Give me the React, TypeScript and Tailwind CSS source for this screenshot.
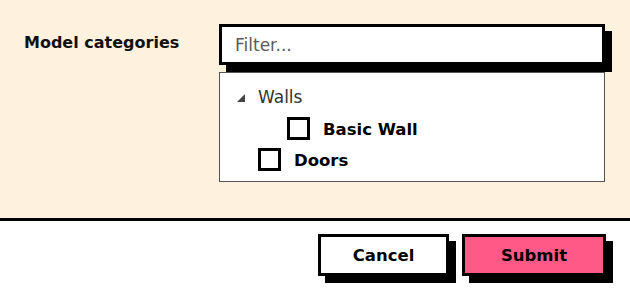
import { useState } from 'react';

type Category = {
  id: string;
  label: string;
  children?: Category[];
};

const categories: Category[] = [
  { id: 'walls', label: 'Walls', children: [{ id: 'basic-wall', label: 'Basic Wall' }] },
  { id: 'doors', label: 'Doors' },
];

function Checkbox({ checked, onChange }: { checked: boolean; onChange: () => void }) {
  return (
    <button
      type="button"
      onClick={onChange}
      className="w-[23px] h-[23px] shrink-0 border-[3px] border-black bg-white flex items-center justify-center"
    >
      {checked && <span className="w-[11px] h-[11px] bg-black" />}
    </button>
  );
}

export default function App() {
  const [filter, setFilter] = useState('');
  const [checked, setChecked] = useState<Record<string, boolean>>({});

  const toggle = (id: string) => setChecked((c) => ({ ...c, [id]: !c[id] }));

  return (
    <div className="w-[630px] h-[295px] flex flex-col font-['DejaVu_Sans',sans-serif] text-black overflow-hidden">
      {/* Form area */}
      <div className="h-[218px] bg-[#fef2df] flex pl-6 pt-6">
        <div className="w-[195px] pt-[9px] text-[16px] leading-[20px] font-bold text-[#111]">
          Model categories
        </div>

        <div className="w-[386px] flex flex-col">
          <input
            value={filter}
            onChange={(e) => setFilter(e.target.value)}
            placeholder="Filter..."
            className="h-[41px] w-full border-[3px] border-black bg-white px-[13px] text-[17px] text-[#333] placeholder:text-[#5a5a5a] outline-none shadow-[7px_7px_0_0_#000]"
          />

          {/* Category tree */}
          <div className="mt-[7px] border border-[#555] bg-white pt-[9px] pb-[6px]">
            {categories.map((cat) =>
              cat.children ? (
                <div key={cat.id}>
                  <div className="h-[31px] flex items-center pl-[17px]">
                    <svg width="8" height="8" viewBox="0 0 8 8" className="mr-[13px]">
                      <polygon points="8,0 8,8 0,8" fill="#444" />
                    </svg>
                    <span className="text-[17px] text-[#333]">{cat.label}</span>
                  </div>
                  {cat.children.map((child) => (
                    <div key={child.id} className="h-[31px] flex items-center pl-[67px] gap-[13px]">
                      <Checkbox checked={!!checked[child.id]} onChange={() => toggle(child.id)} />
                      <span className="pt-[3px] text-[16.5px] font-bold">{child.label}</span>
                    </div>
                  ))}
                </div>
              ) : (
                <div key={cat.id} className="h-[31px] flex items-center pl-[38px] gap-[13px]">
                  <Checkbox checked={!!checked[cat.id]} onChange={() => toggle(cat.id)} />
                  <span className="pt-[3px] text-[16.5px] font-bold">{cat.label}</span>
                </div>
              )
            )}
          </div>
        </div>
      </div>

      {/* Actions */}
      <div className="flex-1 bg-white border-t-[3px] border-black flex justify-end items-start pt-[13px] pr-6 gap-[13px]">
        <button
          type="button"
          className="w-[131px] h-[42px] pt-[2px] border-[3px] border-black bg-white text-[16.5px] font-bold shadow-[7px_7px_0_0_#000]"
        >
          Cancel
        </button>
        <button
          type="button"
          className="w-[144px] h-[42px] pt-[2px] border-[3px] border-black bg-[#ff5a87] text-[16.5px] font-bold shadow-[7px_7px_0_0_#000]"
        >
          Submit
        </button>
      </div>
    </div>
  );
}
